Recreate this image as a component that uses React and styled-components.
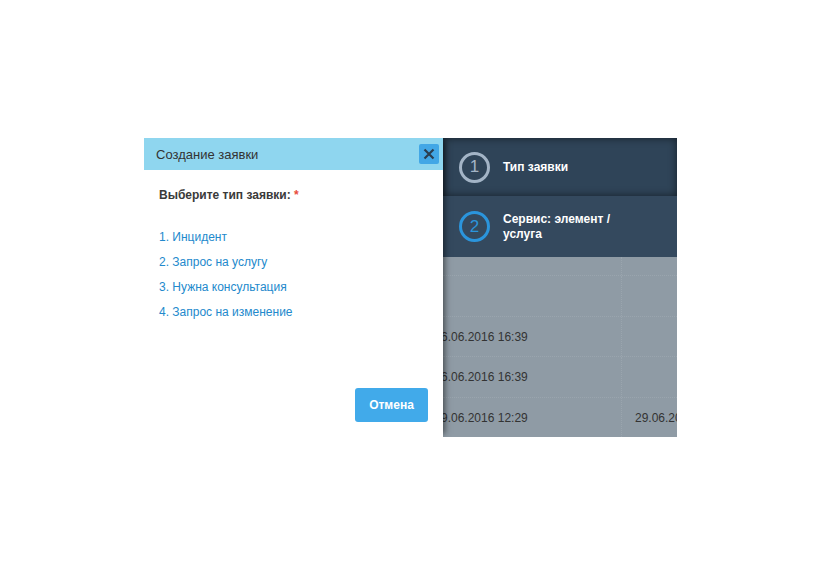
import React from 'react';
import styled, { createGlobalStyle } from 'styled-components';

const Global = createGlobalStyle`
  html, body {
    margin: 0;
    padding: 0;
    background: #fff;
    font-family: "Liberation Sans", Arial, sans-serif;
  }
`;

const Page = styled.div`
  padding: 138px 0 0 144px;
  height: 575px;
  box-sizing: border-box;
`;

const Frame = styled.div`
  display: flex;
  width: 533px;
  height: 299px;
  overflow: hidden;
`;

const Modal = styled.div`
  position: relative;
  z-index: 2;
  width: 299px;
  flex-shrink: 0;
  background: #fff;
  display: flex;
  flex-direction: column;
  box-shadow: 5px 0 6px -3px rgba(0, 0, 0, 0.5);
`;

const Header = styled.div`
  height: 32px;
  background: #8fd6ef;
  display: flex;
  align-items: center;
  justify-content: space-between;
  padding: 0 4px 0 12px;
  font-size: 13px;
  color: #333;
`;

const CloseBtn = styled.button`
  width: 20px;
  height: 20px;
  border: none;
  border-radius: 2px;
  background: #42a7e6;
  padding: 0;
  display: flex;
  align-items: center;
  justify-content: center;
  cursor: pointer;
`;

const Body = styled.div`
  flex: 1;
  display: flex;
  flex-direction: column;
  padding: 18px 15px 15px 15px;
`;

const Label = styled.div`
  font-size: 12px;
  font-weight: bold;
  color: #3a3a3a;

  span {
    color: #e74c3c;
  }
`;

const TypeList = styled.div`
  display: flex;
  flex-direction: column;
  gap: 10px;
  margin-top: 28px;
`;

const TypeLink = styled.a`
  font-size: 12px;
  line-height: 15px;
  color: #2289cc;
  text-decoration: none;
  cursor: pointer;
`;

const Footer = styled.div`
  margin-top: auto;
  display: flex;
  justify-content: flex-end;
`;

const CancelBtn = styled.button`
  width: 73px;
  height: 34px;
  border: none;
  border-radius: 3px;
  background: #41aaea;
  color: #fff;
  font-family: inherit;
  font-size: 12px;
  font-weight: bold;
  cursor: pointer;
`;

const Side = styled.div`
  width: 234px;
  flex-shrink: 0;
  display: flex;
  flex-direction: column;
  overflow: hidden;
`;

const Step = styled.div`
  height: ${(p) => p.h}px;
  display: flex;
  align-items: center;
  gap: 13px;
  padding-left: 16px;
  background: ${(p) => (p.active ? '#2f4458' : '#34495e')};
  box-shadow: ${(p) => (p.active ? 'inset 0 0 8px rgba(0, 0, 0, 0.55)' : 'none')};
`;

const Circle = styled.div`
  width: 25px;
  height: 25px;
  border-radius: 50%;
  border: 3px solid ${(p) => p.color};
  color: ${(p) => p.color};
  font-size: 17px;
  display: flex;
  align-items: center;
  justify-content: center;
  flex-shrink: 0;
`;

const StepText = styled.div`
  font-size: 12px;
  font-weight: bold;
  color: #fff;
  line-height: 15px;
  width: 110px;
`;

const Table = styled.div`
  flex: 1;
  background: #8f9ba5;
  display: flex;
  flex-direction: column;
`;

const Row = styled.div`
  height: ${(p) => p.h}px;
  display: grid;
  grid-template-columns: 179px 1fr;
  border-bottom: 1px dotted #9aa5ae;
  box-sizing: border-box;

  &:last-child {
    border-bottom: none;
  }
`;

const Cell = styled.div`
  display: flex;
  align-items: center;
  font-size: 12px;
  color: #333;
  white-space: nowrap;
  padding-left: ${(p) => p.pad || 0}px;
  border-right: ${(p) => (p.line ? '1px dotted #9aa5ae' : 'none')};
`;

const Shift = styled.span`
  margin-left: -2px;
`;

const types = [
  '1. Инцидент',
  '2. Запрос на услугу',
  '3. Нужна консультация',
  '4. Запрос на изменение',
];

const rows = [
  { h: 19, a: '', b: '' },
  { h: 41, a: '', b: '' },
  { h: 40, a: '6.06.2016 16:39', b: '' },
  { h: 41, a: '6.06.2016 16:39', b: '' },
  { h: 39, a: '9.06.2016 12:29', b: '29.06.2016' },
];

export default function App() {
  return (
    <>
      <Global />
      <Page>
        <Frame>
          <Modal>
            <Header>
              Создание заявки
              <CloseBtn aria-label="close">
                <svg width="12" height="12" viewBox="0 0 12 12">
                  <path d="M1.5 1.5 L10.5 10.5 M10.5 1.5 L1.5 10.5" stroke="#2b3e50" strokeWidth="2.2" />
                </svg>
              </CloseBtn>
            </Header>
            <Body>
              <Label>
                Выберите тип заявки: <span>*</span>
              </Label>
              <TypeList>
                {types.map((t) => (
                  <TypeLink key={t}>{t}</TypeLink>
                ))}
              </TypeList>
              <Footer>
                <CancelBtn>Отмена</CancelBtn>
              </Footer>
            </Body>
          </Modal>
          <Side>
            <Step h={58} active>
              <Circle color="#a3b4c6">1</Circle>
              <StepText>Тип заявки</StepText>
            </Step>
            <Step h={61}>
              <Circle color="#2b95dc">2</Circle>
              <StepText>Сервис: элемент / услуга</StepText>
            </Step>
            <Table>
              {rows.map((r, i) => (
                <Row key={i} h={r.h}>
                  <Cell line>
                    {r.a && <Shift>{r.a}</Shift>}
                  </Cell>
                  <Cell pad={13}>{r.b}</Cell>
                </Row>
              ))}
            </Table>
          </Side>
        </Frame>
      </Page>
    </>
  );
}
